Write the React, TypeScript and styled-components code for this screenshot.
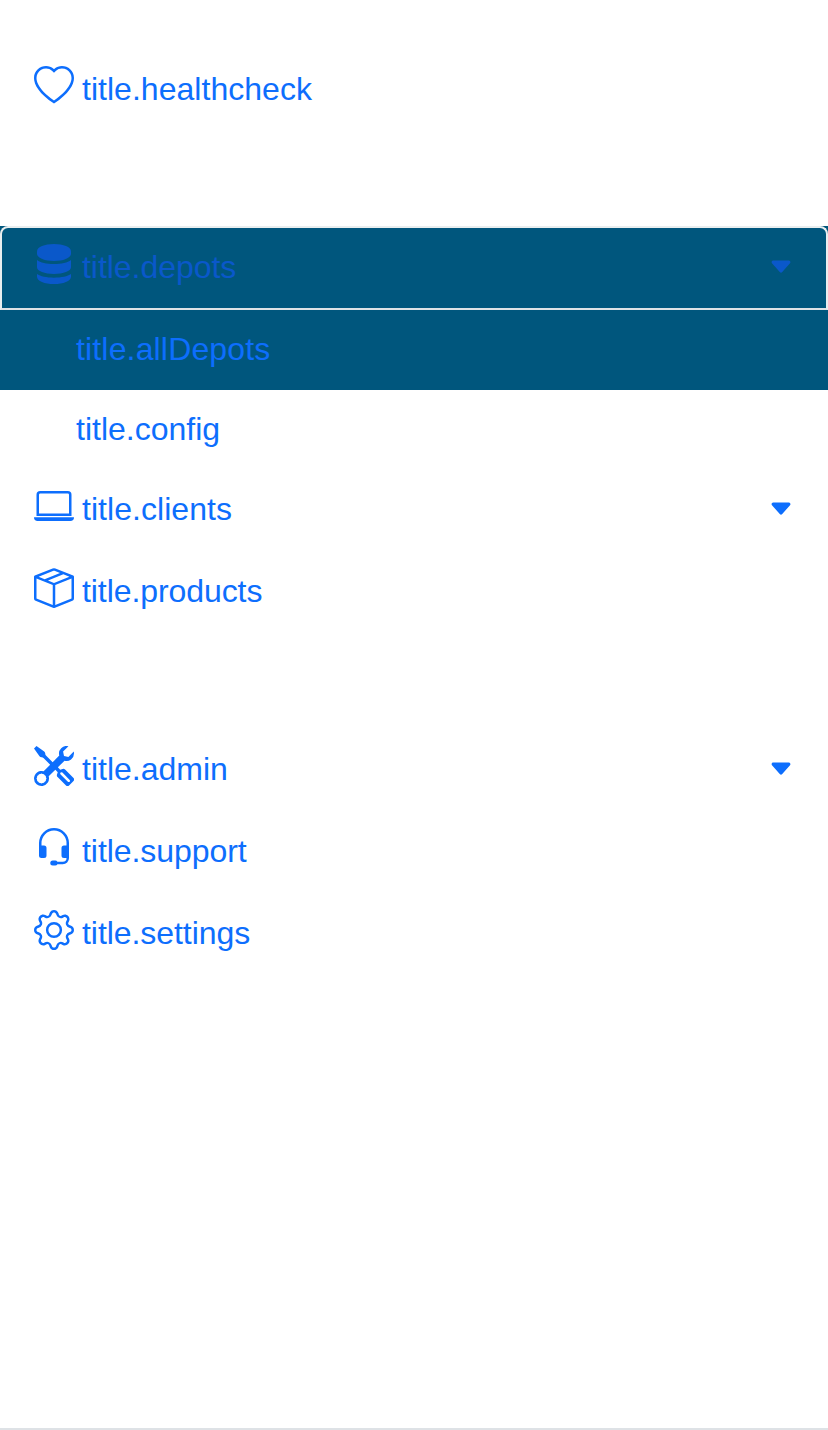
import React from 'react';
import styled, { createGlobalStyle } from 'styled-components';
import { BsHeart, BsLaptop, BsBoxSeam, BsTools, BsHeadset, BsGear, BsCaretDownFill } from 'react-icons/bs';

const GlobalStyle = createGlobalStyle`
  body { margin: 0; background: #fff; }
  *, *::before, *::after { box-sizing: border-box; }
`;

const Sidebar = styled.nav`
  display: flex;
  flex-direction: column;
  height: 1430px;
  padding-top: 50px;
  border-bottom: 2px solid #dee2e6;
  font-family: "Liberation Sans", Arial, sans-serif;
  font-size: 32px;
  line-height: 46px;
  color: #0d6efd;
`;

const Group = styled.div<{ $gap?: number }>`
  display: flex;
  flex-direction: column;
  margin-bottom: ${p => p.$gap ?? 0}px;
`;

const Item = styled.a`
  display: flex;
  align-items: flex-start;
  height: 82px;
  padding: 16px 34px;
  color: inherit;
`;

const ActiveFrame = styled.div`
  height: 84px;
  background: #00567d;
`;

const ActiveItem = styled(Item)`
  height: 84px;
  border: 2px solid #e9eeef;
  border-bottom-color: #dee2e6;
  border-radius: 8px 8px 0 0;
  padding: 16px 32px;
  color: #0a58ca;
`;

const SubItem = styled.a<{ $active?: boolean }>`
  height: 80px;
  padding: 16px 76px;
  background: ${p => (p.$active ? '#00567d' : 'transparent')};
`;

const Label = styled.span<{ $tracking?: number }>`
  letter-spacing: ${p => p.$tracking ?? 0}px;
`;

const IconBox = styled.span`
  display: flex;
  justify-content: center;
  width: 40px;
  height: 40px;
  margin-right: 8px;
`;

const Caret = styled.span`
  display: flex;
  margin: 10px 0 0 auto;
`;

type IconProps = { size?: number };

function DatabaseIcon({ size = 40 }: IconProps) {
  return (
    <svg width={size * 0.85} height={size} viewBox="0 0 102 120" fill="currentColor">
      <path d="M0 22C0 9 23 0 51 0s51 9 51 22v7c0 13-23 22-51 22S0 42 0 29z" />
      <path d="M0 48c10 8 29 12 51 12s41-4 51-12v22c0 12-23 20-51 20S0 82 0 70z" />
      <path d="M0 90c10 7 29 11 51 11s41-4 51-11v8c0 13-23 22-51 22S0 111 0 98z" />
    </svg>
  );
}

interface RowProps {
  icon: React.ComponentType<IconProps>;
  label: string;
  tracking?: number;
  caret?: boolean;
}

function Row({ icon: Icon, label, tracking, caret }: RowProps) {
  return (
    <>
      <IconBox><Icon size={40} /></IconBox>
      <Label $tracking={tracking}>{label}</Label>
      {caret && <Caret><BsCaretDownFill size={26} /></Caret>}
    </>
  );
}

export default function App() {
  return (
    <>
      <GlobalStyle />
      <Sidebar>
        <Group $gap={94}>
          <Item><Row icon={BsHeart} label="title.healthcheck" tracking={0.03} /></Item>
        </Group>
        <Group $gap={96}>
          <ActiveFrame>
            <ActiveItem><Row icon={DatabaseIcon} label="title.depots" tracking={-0.04} caret /></ActiveItem>
          </ActiveFrame>
          <SubItem $active><Label $tracking={0.16}>title.allDepots</Label></SubItem>
          <SubItem><Label>title.config</Label></SubItem>
          <Item><Row icon={BsLaptop} label="title.clients" tracking={0.05} caret /></Item>
          <Item><Row icon={BsBoxSeam} label="title.products" tracking={-0.08} /></Item>
        </Group>
        <Group>
          <Item><Row icon={BsTools} label="title.admin" caret /></Item>
          <Item><Row icon={BsHeadset} label="title.support" tracking={-0.06} /></Item>
          <Item><Row icon={BsGear} label="title.settings" tracking={-0.06} /></Item>
        </Group>
      </Sidebar>
    </>
  );
}
